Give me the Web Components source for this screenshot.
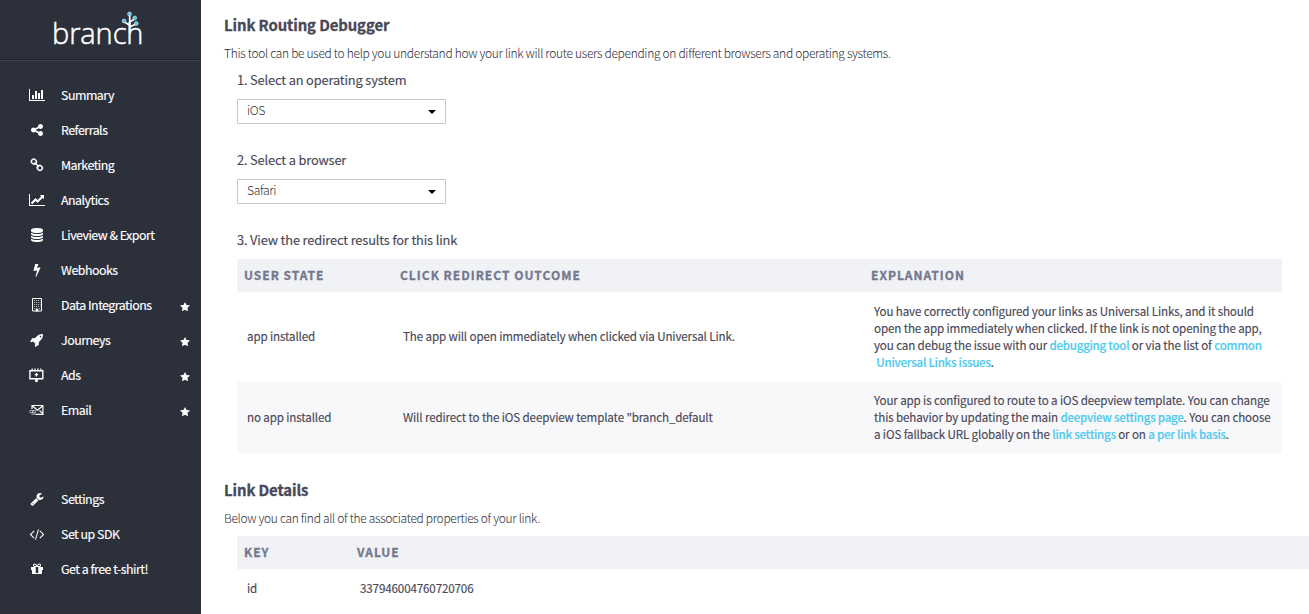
<!DOCTYPE html>
<html lang="en">
<head>
<meta charset="utf-8">
<title>Link Routing Debugger</title>
<style>
html,body{margin:0;height:100%;overflow:hidden;background:#fff}
body{font-family:"Noto Sans CJK SC","Noto Sans",sans-serif;color:#484857}
</style>
</head>
<body>
<app-shell>
  <side-bar slot="side">
    <nav-item icon="bars">Summary</nav-item>
    <nav-item icon="share">Referrals</nav-item>
    <nav-item icon="link">Marketing</nav-item>
    <nav-item icon="line">Analytics</nav-item>
    <nav-item icon="database">Liveview &amp; Export</nav-item>
    <nav-item icon="bolt">Webhooks</nav-item>
    <nav-item icon="building" starred>Data Integrations</nav-item>
    <nav-item icon="rocket" starred>Journeys</nav-item>
    <nav-item icon="ads" starred>Ads</nav-item>
    <nav-item icon="email" starred>Email</nav-item>
    <nav-item slot="footer" icon="wrench">Settings</nav-item>
    <nav-item slot="footer" icon="code">Set up SDK</nav-item>
    <nav-item slot="footer" icon="gift">Get a free t-shirt!</nav-item>
  </side-bar>
  <page-section>
    <span slot="title">Link Routing Debugger</span>
    <span slot="intro">This tool can be used to help you understand how your link will route users depending on different browsers and operating systems.</span>
    <form-step label="1. Select an operating system"><drop-select>iOS</drop-select></form-step>
    <form-step label="2. Select a browser"><drop-select>Safari</drop-select></form-step>
    <form-step label="3. View the redirect results for this link">
      <data-table style="--cols:156px 471px 418px">
        <table-row head><span>USER STATE</span><span>CLICK REDIRECT OUTCOME</span><span>EXPLANATION</span></table-row>
        <table-row style="height:90px"><span style="padding-bottom:2px">app installed</span><span style="padding-bottom:2px">The app will open immediately when clicked via Universal Link.</span><span>You have correctly configured your links as Universal Links, and it should<br>open the app immediately when clicked. If the link is not opening the app,<br>you can debug the issue with our <text-link>debugging tool</text-link> or via the list of <text-link>common<br>&nbsp;Universal Links issues</text-link>.</span></table-row>
        <table-row alt style="height:71px"><span>no app installed</span><span>Will redirect to the iOS deepview template "branch_default</span><span>Your app is configured to route to a iOS deepview template. You can change<br>this behavior by updating the main <text-link>deepview settings page</text-link>. You can choose<br>a iOS fallback URL globally on the <text-link>link settings</text-link> or on <text-link>a per link basis</text-link>.</span></table-row>
      </data-table>
    </form-step>
  </page-section>
  <page-section style="--body-gap:8px">
    <span slot="title">Link Details</span>
    <span slot="intro">Below you can find all of the associated properties of your link.</span>
    <data-table wide style="--cols:113px 1fr">
      <table-row head><span>KEY</span><span>VALUE</span></table-row>
      <table-row style="height:39px"><span>id</span><span>337946004760720706</span></table-row>
    </data-table>
  </page-section>
</app-shell>
<script>
const define = (name, html, setup) => customElements.define(name, class extends HTMLElement {
  constructor(){ super(); this.attachShadow({mode:'open'}); }
  connectedCallback(){ this.shadowRoot.innerHTML = html; if (setup) setup(this, this.shadowRoot); }
});

const ICONS = {
  bars:['0 0 2048 1792','<path d="M640 896v512h-256v-512h256zm384-512v1024h-256v-1024h256zm1024 1152v128h-2048v-1536h128v1408h1920zm-640-896v768h-256v-768h256zm384-384v1152h-256v-1152h256z"/>'],
  line:['0 0 2048 1792','<path d="M2048 1536v128h-2048v-1536h128v1408h1920zm-128-1248v435q0 21-19.5 29.5t-35.5-7.5l-121-121-633 633q-10 10-23 10t-23-10l-233-233-416 416-192-192 585-585q10-10 23-10t23 10l233 233 464-464-121-121q-16-16-7.5-35.5t29.5-19.5h435q14 0 23 9t9 23z"/>'],
  share:['0 0 1792 1792','<path d="M1344 1024q133 0 226.5 93.5t93.5 226.5-93.5 226.5-226.5 93.5-226.5-93.5-93.5-226.5q0-12 2-34l-360-180q-92 86-218 86-133 0-226.5-93.5t-93.5-226.5 93.5-226.5 226.5-93.5q126 0 218 86l360-180q-2-22-2-34 0-133 93.5-226.5t226.5-93.5 226.5 93.5 93.5 226.5-93.5 226.5-226.5 93.5q-126 0-218-86l-360 180q2 22 2 34t-2 34l360 180q92-86 218-86z"/>'],
  link:['0 0 14 14','<g fill="none" stroke="#fff" stroke-width="1.5" stroke-linecap="round"><rect x="1.4" y="1.3" width="5" height="4.6" rx="2.1" transform="rotate(45 3.900 3.600)"/><rect x="7.300" y="7.600" width="5" height="4.600" rx="2.100" transform="rotate(45 9.800 9.900)"/><path d="M5 4.900l3.600 3.700"/></g>'],
  database:['0 0 1792 1792','<path d="M896 768q237 0 443-43t325-127v170q0 69-103 128t-280 93.5-385 34.5-385-34.5-280-93.5-103-128v-170q119 84 325 127t443 43zm0 768q237 0 443-43t325-127v170q0 69-103 128t-280 93.5-385 34.5-385-34.5-280-93.5-103-128v-170q119 84 325 127t443 43zm0-384q237 0 443-43t325-127v170q0 69-103 128t-280 93.5-385 34.5-385-34.5-280-93.5-103-128v-170q119 84 325 127t443 43zm0-1152q208 0 385 34.5t280 93.5 103 128v128q0 69-103 128t-280 93.5-385 34.5-385-34.5-280-93.5-103-128v-128q0-69 103-128t280-93.5 385-34.5z"/>'],
  bolt:['0 0 1792 1792','<path d="M1333 566q18 20 7 44l-540 1157q-13 25-42 25-4 0-14-2-17-5-25.5-19t-4.5-30l197-808-406 101q-4 1-12 1-18 0-31-11-18-15-13-39l201-825q4-14 16-23t28-9h328q19 0 32 12.5t13 29.5q0 8-5 18l-171 463 396-98q8-2 12-2 19 0 34 15z"/>'],
  building:['0 0 14 14','<path fill="none" stroke="#fff" d="M2.500.5h9v12.500h-9z"/><path fill="none" stroke="#fff" stroke-opacity=".65" stroke-dasharray="1.100 .9" d="M4 2.500h6.500M4 4.500h6.500M4 6.500h6.500M4 8.500h6.500M4 10.500h1.500M9 10.500h1.500"/><path d="M5.700 10.500h2.600v3H5.700z"/>'],
  rocket:['0 0 1792 1792','<path d="M1440 448q0-40-28-68t-68-28-68 28-28 68 28 68 68 28 68-28 28-68zm224-288q0 249-75.5 430.5t-253.5 360.5q-81 80-195 176l-20 379q-2 16-16 26l-384 224q-7 4-16 4-12 0-23-9l-64-64q-13-14-8-32l85-276-281-281-276 85q-3 1-9 1-14 0-23-9l-64-64q-17-19-5-39l224-384q10-14 26-16l379-20q96-114 176-195 188-187 358-258t431-71q14 0 24 9.5t10 22.5z"/>'],
  ads:['0 0 14 14','<path fill="none" stroke="#fff" stroke-width="1.400" d="M-.1 2.700h12.900v8H-.1z"/><path d="M1.500.4h1.300v2H1.500zM4.400.4h1.300v2H4.400zM7.300.4h1.300v2H7.300zM10.200.4h1.300v2h-1.300zM5.200 11h2.500v3H5.200zM5.800 5.100h1.300v1h1v1.200h-1v1.100H5.800V7.300H4.800V6.100h1z"/>'],
  email:['0 0 14 14','<path fill="none" stroke="#fff" stroke-width="1.200" d="M2 6V2.500h10.900v8.800H5.500M2.500 3l5 4.200 5-4.200M9.500 7.500l2.700 2.700"/><g fill="none" stroke="#fff" stroke-width=".8" stroke-opacity=".85"><ellipse cx="1.300" cy="8.600" rx="1.600" ry="1.300"/><ellipse cx="4.200" cy="8.600" rx="1.600" ry="1.300"/><path d="M1.500 11.100h4"/></g>'],
  wrench:['0 0 1792 1792','<path d="M448 1472q0-26-19-45t-45-19-45 19-19 45 19 45 45 19 45-19 19-45zm644-420l-682 682q-37 37-90 37-52 0-91-37l-106-108q-38-36-38-90 0-53 38-91l681-681q39 98 114.500 173.500t173.500 114.500zm634-435q0 39-23 106-47 134-164.500 217.500t-258.500 83.500q-185 0-316.500-131.500t-131.500-316.500 131.500-316.500 316.500-131.500q58 0 121.500 16.500t107.500 46.500q16 11 16 28t-16 28l-293 169v224l193 107q5-3 79-48.500t135.500-81 70.500-35.500q15 0 23.500 10t8.500 25z"/>'],
  code:['0 0 1792 1792','<path d="M553 1399l-50 50q-10 10-23 10t-23-10l-466-466q-10-10-10-23t10-23l466-466q10-10 23-10t23 10l50 50q10 10 10 23t-10 23l-393 393 393 393q10 10 10 23t-10 23zm591-1067l-373 1291q-4 13-15.500 19.500t-23.500 2.500l-62-17q-13-4-19.500-15.500t-2.500-24.500l373-1291q4-13 15.500-19.500t23.500-2.500l62 17q13 4 19.500 15.500t2.500 24.500zm657 651l-466 466q-10 10-23 10t-23-10l-50-50q-10-10-10-23t10-23l393-393-393-393q-10-10-10-23t10-23l50-50q10-10 23-10t23 10l466 466q10 10 10 23t-10 23z"/>'],
  gift:['0 0 1792 1792','<path d="M1056 1356v-716h-320v716q0 25 18 38.500t46 13.500h192q28 0 46-13.500t18-38.500zm-456-844h195l-126-161q-26-31-69-31-40 0-68 28t-28 68 28 68 68 28zm688-96q0-40-28-68t-68-28q-43 0-69 31l-125 161h194q40 0 68-28t28-68zm376 256v320q0 14-9 23t-23 9h-96v416q0 40-28 68t-68 28h-1088q-40 0-68-28t-28-68v-416h-96q-14 0-23-9t-9-23v-320q0-14 9-23t23-9h440q-93 0-158.500-65.500t-65.500-158.500 65.500-158.500 158.500-65.500q107 0 168 77l128 165 128-165q61-77 168-77 93 0 158.500 65.500t65.500 158.500-65.500 158.500-158.500 65.500h440q14 0 23 9t9 23z"/>'],
  star:['0 0 1792 1792','<path d="M1728 647q0 22-26 48l-363 354 86 500q1 7 1 20 0 21-10.500 35.500t-30.500 14.500q-19 0-40-12l-449-236-449 236q-22 12-40 12-21 0-31.500-14.500t-10.500-35.500q0-6 2-20l86-500-364-354q-25-27-25-48 0-37 56-46l502-73 225-455q19-41 49-41t49 41l225 455 502 73q56 9 56 46z"/>']
};

define('glyph-icon', `<style>:host{display:flex;justify-content:center;height:14px}svg{height:100%;fill:#fff;overflow:visible;display:block}</style><svg></svg>`, (el, root) => {
  const [box, body] = ICONS[el.getAttribute('name')];
  const svg = root.querySelector('svg');
  svg.setAttribute('viewBox', box);
  svg.innerHTML = body;
});

define('nav-item', `<style>
:host{display:grid;grid-template-columns:24px 104px 1fr;column-gap:12px;align-items:center;height:35px;padding-left:25px;color:#fff;font-size:12.400px;line-height:20px;letter-spacing:-.5px;white-space:nowrap;-webkit-text-stroke:.15px #fff}
glyph-icon{margin-top:1px}
.star{height:10px;width:10px;margin-left:3px;margin-top:4px}
</style><span><slot></slot></span>`, (el, root) => {
  const icon = document.createElement('glyph-icon');
  icon.setAttribute('name', el.getAttribute('icon'));
  root.querySelector('span').before(icon);
  if (el.hasAttribute('starred')) {
    const star = document.createElement('glyph-icon');
    star.className = 'star';
    star.setAttribute('name', 'star');
    root.append(star);
  }
});

define('brand-logo', `<style>
:host{display:flex;justify-content:center;height:60px;box-sizing:border-box;padding-right:6px;border-bottom:1px solid #20242d;box-shadow:0 1px #3d424d}
.mark{position:relative;width:91px;height:60px}
.word{display:block;font:300 29px/40px "Open Sans",sans-serif;color:#fff;letter-spacing:-.1px;padding-top:13px;-webkit-text-stroke:.5px #fff}
svg{position:absolute;left:67px;top:10px}
</style><div class="mark"><span class="word">branch</span><svg width="24" height="24" viewBox="0 0 24 24"><path d="M10.700 5v19M10.500 15l-3.500-2-2.500-2M10.500 12l3.500-2 2-2M10.700 17l6.300-3" fill="none" stroke="#fff" stroke-width="1.700"/><g fill="#5bc5e8" stroke="#e8f4f8" stroke-width=".5"><circle cx="10.500" cy="4" r="2"/><circle cx="15.700" cy="8" r="2"/><circle cx="5" cy="11" r="2"/><circle cx="17.200" cy="13.500" r="2"/></g></svg></div>`);

define('side-bar', `<style>
:host{display:block;width:201px;height:100%;background:#2b303b}
nav{padding-top:17px}
footer{padding-top:54px}
</style><brand-logo></brand-logo><nav><slot></slot></nav><footer><slot name="footer"></slot></footer>`);

define('app-shell', `<style>
:host{display:flex;height:614px}
main{flex:1;min-width:0;padding:11px 0 0 23px;box-sizing:border-box}
</style><slot name="side"></slot><main><slot></slot></main>`);

define('page-section', `<style>
:host{display:block;padding-bottom:23px}
h2{margin:0;font-size:14.900px;line-height:28px;font-weight:700;letter-spacing:-.1px;-webkit-text-stroke:.3px}
p{margin:4px 0 0;font-size:12px;line-height:20px;font-weight:300;white-space:nowrap;letter-spacing:-.315px;color:#363644;-webkit-text-stroke:.05px}
.body{padding:var(--body-gap,7px) 0 0 13px}
</style><h2><slot name="title"></slot></h2><p><slot name="intro"></slot></p><div class="body"><slot></slot></div>`);

define('form-step', `<style>
:host{display:block}
label{display:block;font-size:12.800px;line-height:20px;margin-bottom:9px;letter-spacing:-.14px;-webkit-text-stroke:.15px}
</style><label></label><slot></slot>`, (el, root) => { root.querySelector('label').textContent = el.getAttribute('label'); });

define('drop-select', `<style>
:host{display:flex;align-items:center;justify-content:space-between;width:209px;height:25px;box-sizing:border-box;border:1px solid #c8c8c8;border-radius:1px;padding:0 9px;margin-bottom:26px;font-size:12.200px;line-height:20px;font-weight:300;letter-spacing:-.4px;color:#30303a}
span{padding-bottom:3px}
i{border:4px solid transparent;border-top-color:#000;border-bottom:0}
</style><span><slot></slot></span><i></i>`);

define('data-table', `<style>:host{display:block;width:1045px}:host([wide]){width:auto}</style><slot></slot>`);

define('table-row', `<style>
:host{display:grid;grid-template-columns:var(--cols);align-items:center;font-size:11.600px;line-height:17px;white-space:nowrap;letter-spacing:-.13px;-webkit-text-stroke:.15px}
:host([head]){height:33px;background:#f1f2f6;color:#74788f;font-weight:700;font-size:12px;letter-spacing:1px;-webkit-text-stroke:.3px}
:host([alt]){background:#f8f8fb}
::slotted(span){padding-left:10px}
:host([head]) ::slotted(span){padding-left:7px;padding-bottom:2px}
</style><slot></slot>`);

define('text-link', `<style>:host{display:inline;color:#51cbee;font-weight:500;letter-spacing:-.28px;-webkit-text-stroke:.15px}</style><slot></slot>`);
</script>
</body>
</html>
